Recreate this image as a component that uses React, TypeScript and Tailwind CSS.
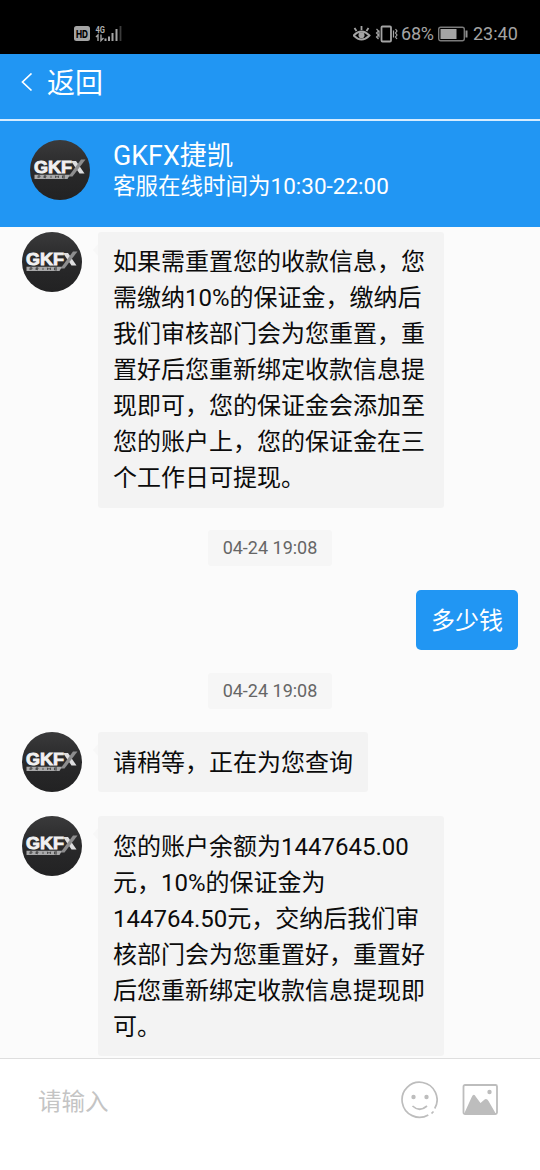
import React from 'react';

function Avatar() {
  return (
    <svg className="size-[60px] shrink-0" viewBox="0 0 60 60" aria-label="GKFX Prime">
      <defs>
        <linearGradient id="disc" x1="0" y1="0" x2="0" y2="1">
          <stop offset="0" stopColor="#3a3a3b" />
          <stop offset="0.5" stopColor="#29292a" />
          <stop offset="1" stopColor="#222223" />
        </linearGradient>
      </defs>
      <circle cx="30" cy="30" r="30" fill="url(#disc)" />
      <text x="4" y="33" fontFamily="'Liberation Sans', sans-serif" fontWeight="700" fontSize="17" textLength="38" lengthAdjust="spacingAndGlyphs" fill="#f1f1f1" stroke="#f1f1f1" strokeWidth="0.900">GKF</text>
      <path d="M41 21h5l8.500 12.500h-5z" fill="#dededf" />
      <path d="M38.500 36.500L51 19.500h4.500L42.500 36.500z" fill="#8d8d8e" />
      <path d="M4.500 34.800h35.500l-2.500 4.200H4.500z" fill="#a9a9aa" />
      <path d="M8 38v-2.200h2v1.300H8M14 38v-2.200h2v1.100h-2l2 1.100M21 35.800V38M25.500 38v-2.200l1.500 1.500 1.500-1.500V38M35 35.800h-2.500V38H35M32.500 36.900H35" fill="none" stroke="#303031" strokeWidth="0.700" />
    </svg>
  );
}

function StatusBar() {
  return (
    <div className="flex h-[54px] shrink-0 items-center bg-black pt-[13px] pl-[74px] pr-[22px] text-[#a4a4a4]">
      <svg width="50" height="20" viewBox="0 0 50 20">
        <rect x="0" y="2" width="16" height="15" rx="2.5" fill="#a4a4a4" />
        <text x="2" y="13.5" fontFamily="Inter, sans-serif" fontWeight="800" fontSize="10.5" textLength="12" lengthAdjust="spacingAndGlyphs" fill="#000">HD</text>
        <text x="21.5" y="8.5" fontFamily="Roboto, sans-serif" fontWeight="700" fontSize="8.5" textLength="9.5" lengthAdjust="spacingAndGlyphs" fill="#b0b0b0">4G</text>
        <path d="M24 17v-6l-2 2M27 10.5v6l2.5-2.5" fill="none" stroke="#a4a4a4" strokeWidth="1.4" />
        <path d="M31.5 17v-2.5M35 17v-4.500M38.500 17v-8M42.500 17v-12" stroke="#a4a4a4" strokeWidth="2" />
        <path d="M46.500 17v-15" stroke="#3c3c3c" strokeWidth="1.8" />
      </svg>
      <svg className="ml-auto" width="48" height="20" viewBox="0 0 48 20" fill="none" stroke="#a4a4a4" strokeWidth="1.8">
        <path d="M0.500 11.500Q8.500 3.500 16.500 11.500Q8.500 19.500 0.500 11.500zM8.500 6V2M3.500 7L1.500 4M13.500 7l2-3" />
        <circle cx="8.500" cy="11.300" r="3" fill="#a4a4a4" stroke="none" />
        <rect x="28.500" y="2.500" width="9.500" height="15" rx="1" />
        <path d="M23.500 5l2 2-2 2 2 2-2 2 2 2M26 6.500v7M40.500 6.500v7M42.500 5l1.500 2-1.500 2 1.500 2-1.500 2 1.500 2" strokeWidth="1.200" />
      </svg>
      <span className="w-[33px] whitespace-nowrap text-[18px] leading-5 tracking-[-0.2px]">68%</span>
      <svg className="ml-[4px]" width="30" height="20" viewBox="0 0 30 20" fill="none">
        <rect x="0.700" y="3.200" width="25.600" height="13.600" rx="2" stroke="#7a7a7a" strokeWidth="1.400" />
        <rect x="2.500" y="5" width="16" height="10" fill="#a4a4a4" />
        <path d="M28.500 6.500v7" stroke="#929292" strokeWidth="2" />
      </svg>
      <span className="ml-[5px] w-[45px] whitespace-nowrap text-[18px] leading-5">23:40</span>
    </div>
  );
}

function Incoming({ lines, className = '' }: { lines: string[]; className?: string }) {
  return (
    <div className="flex shrink-0 items-start pl-[22px]">
      <Avatar />
      <svg className="mt-3 ml-[11px] shrink-0" width="5" height="12" viewBox="0 0 5 12">
        <path d="M5 0L0 6l5 6z" fill="#f7f7f7" />
      </svg>
      <div className={`rounded-[3px] bg-[#f3f3f3] px-[15px] text-[24px] leading-[36px] text-[#0b0b0b] ${className}`}>
        {lines.map((line) => (
          <div key={line} className="h-9 whitespace-nowrap">{line}</div>
        ))}
      </div>
    </div>
  );
}

function Timestamp() {
  return (
    <div className="flex h-9 w-[124px] shrink-0 items-center justify-center self-center rounded-[3px] bg-[#f6f6f6] pb-0.5 text-[18px] text-[#666]">
      04-24 19:08
    </div>
  );
}

export default function App() {
  return (
    <div className="flex h-[1170px] w-[540px] flex-col overflow-hidden bg-[#fbfbfb] font-['Roboto','Noto_Sans_CJK_SC',sans-serif]">
      <StatusBar />
      <nav className="flex h-[67px] shrink-0 items-center border-b-2 border-[#d5ecff] bg-[#2196f3] pb-[8px] pl-[21px] text-white">
        <svg width="12" height="20" viewBox="0 0 12 20" fill="none" stroke="currentColor" strokeWidth="1.7">
          <path d="M10.500 0.500L1.500 9l9 8.500" />
        </svg>
        <span className="mt-[3px] ml-[14px] text-[28px] leading-9">返回</span>
      </nav>
      <header className="flex h-[106px] shrink-0 items-start bg-[#2196f3] pt-[19px] pl-[30px] text-white">
        <Avatar />
        <div className="ml-[23px] whitespace-nowrap">
          <div className="text-[26.8px] leading-[32px]">GKFX捷凯</div>
          <div className="text-[22.5px] leading-[28px]">客服在线时间为10:30-22:00</div>
        </div>
      </header>
      <main className="flex min-h-0 flex-1 flex-col overflow-hidden pt-[5px]">
        <Incoming
          className="w-[346px] py-3"
          lines={[
            '如果需重置您的收款信息，您',
            '需缴纳10%的保证金，缴纳后',
            '我们审核部门会为您重置，重',
            '置好后您重新绑定收款信息提',
            '现即可，您的保证金会添加至',
            '您的账户上，您的保证金在三',
            '个工作日可提现。',
          ]}
        />
        <div className="mt-[22px] flex shrink-0 flex-col">
          <Timestamp />
          <div className="mt-6 mr-[22px] mb-[23px] self-end rounded-[5px] bg-[#2196f3] px-[15px] pt-[13px] pb-[11px] text-[24px] leading-[36px] text-white">多少钱</div>
          <Timestamp />
          <div className="mt-[23px] flex flex-col gap-6">
            <Incoming className="pt-[13px] pb-[11px]" lines={['请稍等，正在为您查询']} />
            <Incoming
              className="w-[346px] pt-[13px] pb-[11px]"
              lines={[
                '您的账户余额为1447645.00',
                '元，10%的保证金为',
                '144764.50元，交纳后我们审',
                '核部门会为您重置好，重置好',
                '后您重新绑定收款信息提现即',
                '可。',
              ]}
            />
          </div>
        </div>
      </main>
      <footer className="flex h-[112px] shrink-0 items-start border-t border-[#dedede] bg-white pt-[22px] pr-[42px] pl-[38px]">
        <span className="mt-[3px] text-[23.5px] leading-9 text-[#c4c4c4]">请输入</span>
        <svg className="mr-px ml-auto" width="37" height="38" viewBox="0 0 37 38" fill="none" stroke="#bdbdbd" strokeWidth="1.7">
          <path d="M33.720 27.500A17.500 17.500 0 1 0 27.300 33.920M32.500 30.500A17.500 17.500 0 0 1 30.500 32.500" />
          <circle cx="12.500" cy="16" r="2.200" fill="#bdbdbd" stroke="none" />
          <circle cx="25.500" cy="16" r="2.200" fill="#bdbdbd" stroke="none" />
          <path d="M11.500 25q7 6.500 14.500 0" />
        </svg>
        <svg className="ml-[23px]" width="36" height="38" viewBox="0 0 36 38" fill="none">
          <rect x="1.500" y="4" width="33.500" height="29" rx="1.500" stroke="#bdbdbd" strokeWidth="1.800" />
          <path d="M2 33L9.500 16.500Q11.500 11.500 14 16L18.500 22L22 19Q24.500 16.500 26.500 20L34 33z" fill="#bdbdbd" />
          <circle cx="27.500" cy="11" r="2.200" fill="#bdbdbd" />
        </svg>
      </footer>
    </div>
  );
}
